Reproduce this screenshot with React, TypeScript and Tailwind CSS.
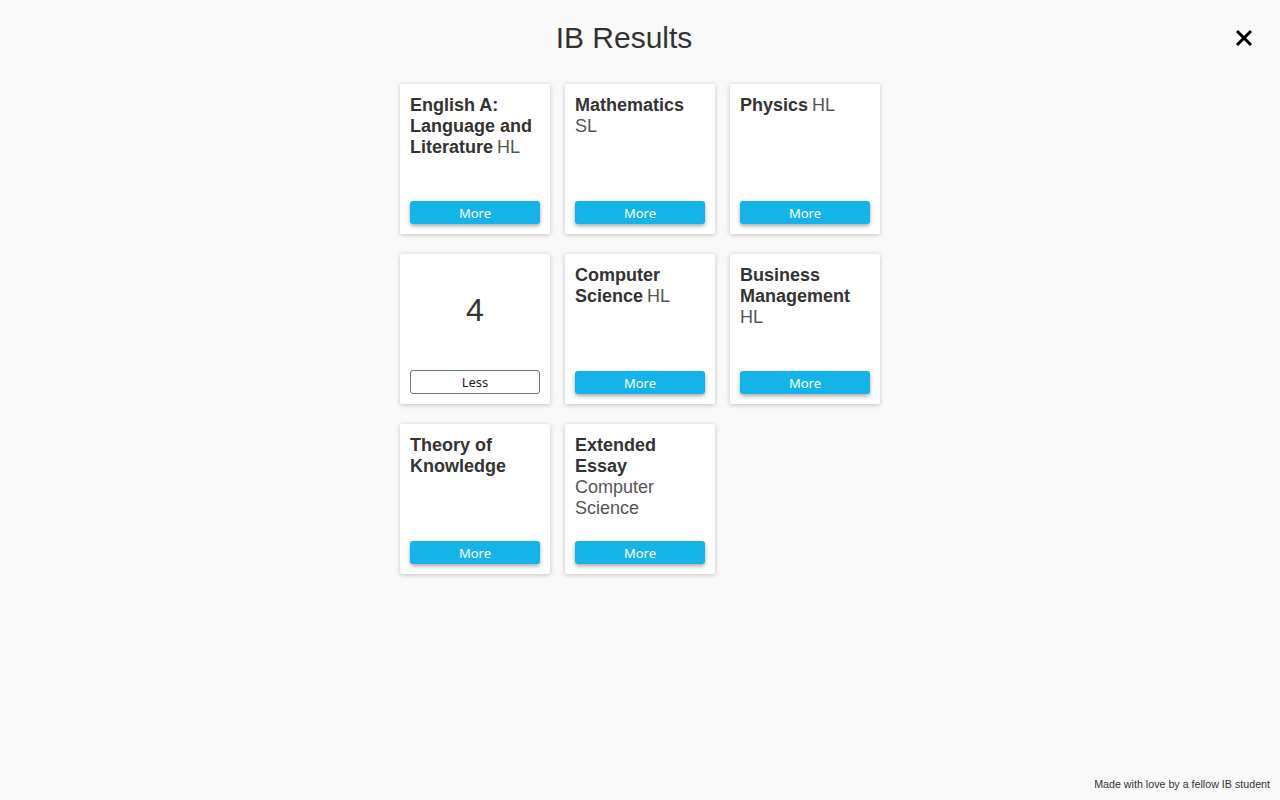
import { useState } from "react";

type Subject = {
    name: string,
    level?: string,
    grade: number,
}

const subjects: Subject[] = [
    { name: "English A: Language and Literature", level: "HL", grade: 5 },
    { name: "Mathematics", level: "SL", grade: 6 },
    { name: "Physics", level: "HL", grade: 5 },
    { name: "Chemistry", level: "SL", grade: 4 },
    { name: "Computer Science", level: "HL", grade: 7 },
    { name: "Business Management", level: "HL", grade: 6 },
    { name: "Theory of Knowledge", grade: 2 },
    { name: "Extended Essay", level: "Computer Science", grade: 2 },
]

const Card = ({ subject, open }: { subject: Subject, open: boolean }) => {
    const [show, setShow] = useState(open)
    return (
        <div className="w-[150px] h-[150px] bg-white rounded-[2px] shadow-[0_1px_5px_rgba(0,0,0,0.22)] p-[10px] pt-[11px] flex flex-col justify-between">
            {show ? (
                <div className="flex-1 flex items-start justify-center pt-[29px] text-[32px] leading-none text-[#333] font-['Liberation_Sans',sans-serif]">
                    {subject.grade}
                </div>
            ) : (
                <div className="text-[18px] leading-[21px] text-[#333] font-['Liberation_Sans',Arial,sans-serif] [word-spacing:-1px]">
                    <span className="font-bold [word-spacing:0px]">{subject.name}</span>
                    {subject.level && <span className="text-[#555]"> <span className="[word-spacing:0px]">{subject.level}</span></span>}
                </div>
            )}
            {show ? (
                <button
                    className="w-[130px] h-[24px] pt-[1px] rounded-[3px] border border-[#777] bg-white text-[13px] text-[#222] font-['Noto_Sans',sans-serif]"
                    onClick={() => setShow(false)}
                >Less</button>
            ) : (
                <button
                    className="w-[130px] h-[23px] pt-[2px] rounded-[3px] bg-[#14b4e8] text-white text-[13px] font-['Noto_Sans',sans-serif] shadow-[0_2px_4px_rgba(0,0,0,0.35)]"
                    onClick={() => setShow(true)}
                >More</button>
            )}
        </div>
    )
}

const App = () => {
    return (
        <div className="min-h-[800px] bg-[#f9f9f9] relative flex flex-col items-center font-['Liberation_Sans',sans-serif]">
            <h1 className="mt-[20px] mr-[32px] text-[30px] leading-[36px] text-[#333]">IB Results</h1>
            <button className="absolute right-[27px] top-[29px] text-black">
                <svg width="18" height="18" viewBox="0 0 18 18">
                    <path d="M2 2 L16 16 M16 2 L2 16" stroke="black" strokeWidth="3" />
                </svg>
            </button>
            <div className="mt-[28px] grid grid-cols-[150px_150px_150px] gap-x-[15px] gap-y-[20px]">
                {subjects.map((s, i) => (
                    <Card key={i} subject={s} open={i === 3} />
                ))}
            </div>
            <div className="absolute right-[10px] bottom-[8px] text-[10.7px] text-[#333] font-['Liberation_Sans',sans-serif]">
                Made with love by a fellow IB student
            </div>
        </div>
    );
}

export default App
